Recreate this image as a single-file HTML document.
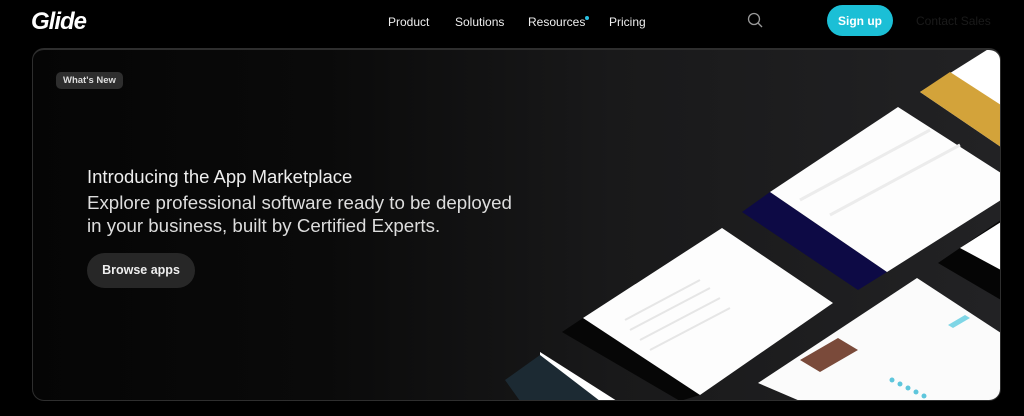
<!DOCTYPE html>
<html><head><meta charset="utf-8"><style>
*{margin:0;padding:0;box-sizing:border-box}
body{width:1024px;height:416px;background:#000;overflow:hidden;font-family:"Liberation Sans",sans-serif;color:#fff;position:relative}
.logo{position:absolute;left:31px;top:8px;font-size:24px;font-weight:bold;font-style:italic;letter-spacing:-1px}
.nav{position:absolute;top:15px;font-size:12px;color:#eee}
.dot{position:absolute;left:585px;top:16px;width:4px;height:4px;border-radius:50%;background:#29c0e0}
.signup{position:absolute;left:827px;top:5px;width:66px;height:31px;border-radius:16px;background:#1bbfd6;font-size:12px;font-weight:bold;text-align:center;line-height:32px}
.contact{position:absolute;left:916px;top:14px;font-size:12px;color:#1a1a1a}
.card{position:absolute;left:32px;top:48px;width:969px;height:353px;border-radius:12px;overflow:hidden;background:linear-gradient(90deg,#050505 0%,#0a0a0a 30%,#19191a 60%,#222224 100%);border:1px solid #2e2e2e;border-top:2px solid #2e2e2e}
.badge{position:absolute;left:23px;top:22px;background:#2e2e2e;border-radius:5px;font-size:9.5px;font-weight:bold;padding:3px 7px;color:#ddd}
h1{position:absolute;left:54px;top:116px;font-size:18.5px;font-weight:normal;color:#eee;white-space:nowrap}
.sub{position:absolute;left:54px;top:141px;font-size:18.7px;line-height:23px;color:#ddd;white-space:nowrap}
.btn{position:absolute;left:54px;top:203px;width:108px;height:35px;border-radius:18px;background:#272727;font-size:12.5px;font-weight:bold;text-align:center;line-height:35px;color:#eee}
svg{position:absolute;left:0;top:0}
</style></head><body>
<div class="logo">Glide</div>
<div class="nav" style="left:388px">Product</div>
<div class="nav" style="left:455px">Solutions</div>
<div class="nav" style="left:528px">Resources</div>
<div class="dot"></div>
<div class="nav" style="left:609px">Pricing</div>
<svg width="1024" height="416" style="z-index:1"><circle cx="754" cy="19" r="5.5" fill="none" stroke="#999" stroke-width="1.3"/><line x1="758" y1="23" x2="762" y2="27" stroke="#999" stroke-width="1.3"/></svg>
<div class="signup">Sign up</div>
<div class="contact">Contact Sales</div>
<div class="card">
<svg width="969" height="353" viewBox="33 50 969 353">
<polygon points="920,92 990,48 1001,48 1001,147" fill="#fff"/>
<polygon points="920,92 950,72 1001,105 1001,147" fill="#d3a33a"/>
<polygon points="742,212 770,192 887,272 858,290" fill="#0d0a45"/>
<polygon points="770,192 898,107 1001,173 1001,200 887,272" fill="#fdfdfd"/>
<g stroke="#ececec" stroke-width="3"><line x1="800" y1="200" x2="930" y2="130"/><line x1="830" y1="215" x2="960" y2="145"/></g>
<polygon points="938,263 1001,220 1001,300" fill="#050505"/>
<polygon points="960,248 1001,222 1001,270" fill="#fff"/>
<polygon points="562,332 583,318 700,395 680,401" fill="#060606"/>
<polygon points="583,318 722,228 833,303 700,395" fill="#fdfdfd"/>
<g stroke="#e6e6e6" stroke-width="2"><line x1="625" y1="320" x2="700" y2="280"/><line x1="630" y1="330" x2="710" y2="288"/><line x1="640" y1="340" x2="720" y2="298"/><line x1="650" y1="350" x2="730" y2="308"/></g>
<polygon points="540,352 617,401 540,401" fill="#fff"/>
<polygon points="505,380 540,355 600,401 520,401" fill="#1c2a33"/>
<polygon points="758,383 917,278 1001,333 1001,401 800,401" fill="#fbfbfb"/>
<polygon points="800,360 838,338 858,350 820,372" fill="#7a4a3a"/>
<g fill="#5ec6dc"><circle cx="892" cy="380" r="2.5"/><circle cx="900" cy="384" r="2.5"/><circle cx="908" cy="388" r="2.5"/><circle cx="916" cy="392" r="2.5"/><circle cx="924" cy="396" r="2.5"/></g>
<polygon points="948,325 965,315 970,318 953,328" fill="#7fd6e6"/>
</svg>
<div class="badge">What's New</div>
<h1>Introducing the App Marketplace</h1>
<div class="sub">Explore professional software ready to be deployed<br>in your business, built by Certified Experts.</div>
<div class="btn">Browse apps</div>
</div>
</body></html>
